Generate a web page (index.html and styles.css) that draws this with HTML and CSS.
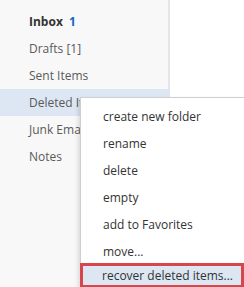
FILE: index.html
```html
<!DOCTYPE html>
<html>
  <head>
    <meta charset="utf-8">
    <title>Folders</title>
    <link rel="stylesheet" href="styles.css">
  </head>
  <body>
    <div class="app">
      <ul class="folders">
        <li class="unread">Inbox <span class="count">1</span></li>
        <li>Drafts [1]</li>
        <li>Sent Items</li>
        <li class="selected">Deleted Items</li>
        <li>Junk Email</li>
        <li>Notes</li>
      </ul>
      <div class="main"></div>
    </div>
    <ul class="menu">
      <li>create new folder</li>
      <li>rename</li>
      <li>delete</li>
      <li>empty</li>
      <li>add to Favorites</li>
      <li>move...</li>
      <li class="focus">recover deleted items...</li>
    </ul>
  </body>
</html>
```

FILE: styles.css
```css
html, body { overflow: hidden; }
body {
  margin: 0;
  background-color: white;
  font-family: "Open Sans", "Noto Sans", sans-serif;
  font-size: 12px;
}
.app { display: flex; height: 287px; }
.folders {
  list-style: none;
  margin: 0;
  padding: 8px 0 0 0;
  width: 168px;
  background-color: #f8f8f8;
  border-right: 2px solid #e6e6e6;
}
.folders li {
  height: 27px;
  line-height: 27px;
  padding-left: 29px;
  color: #5a5a5a;
  white-space: nowrap;
  overflow: hidden;
}
.folders li.unread { font-weight: bold; color: #333; }
.folders li .count { color: #1368c4; font-weight: bold; margin-left: 3px; }
.folders li.selected { background-color: #dce7f3; margin-right: -2px; }
.main { flex: 1; }

.menu {
  position: absolute;
  left: 80px;
  top: 97px;
  box-sizing: border-box;
  width: 164px;
  height: 190px;
  margin: 0;
  padding: 5px 0 0 0;
  list-style: none;
  background-color: white;
  border: 1px solid #cfcfcf;
  border-right: none;
  border-bottom: none;
  box-shadow: -2px 2px 4px rgba(0, 0, 0, 0.12);
}
.menu li {
  height: 27px;
  line-height: 27px;
  padding-left: 22px;
  color: #333;
  white-space: nowrap;
}
.menu li.focus {
  background-color: #dce7f3;
  border: 3px solid #d8464b;
  margin-left: -1px;
  margin-top: -2px;
  height: 19px;
  line-height: 19px;
  padding-left: 19px;
}
```
